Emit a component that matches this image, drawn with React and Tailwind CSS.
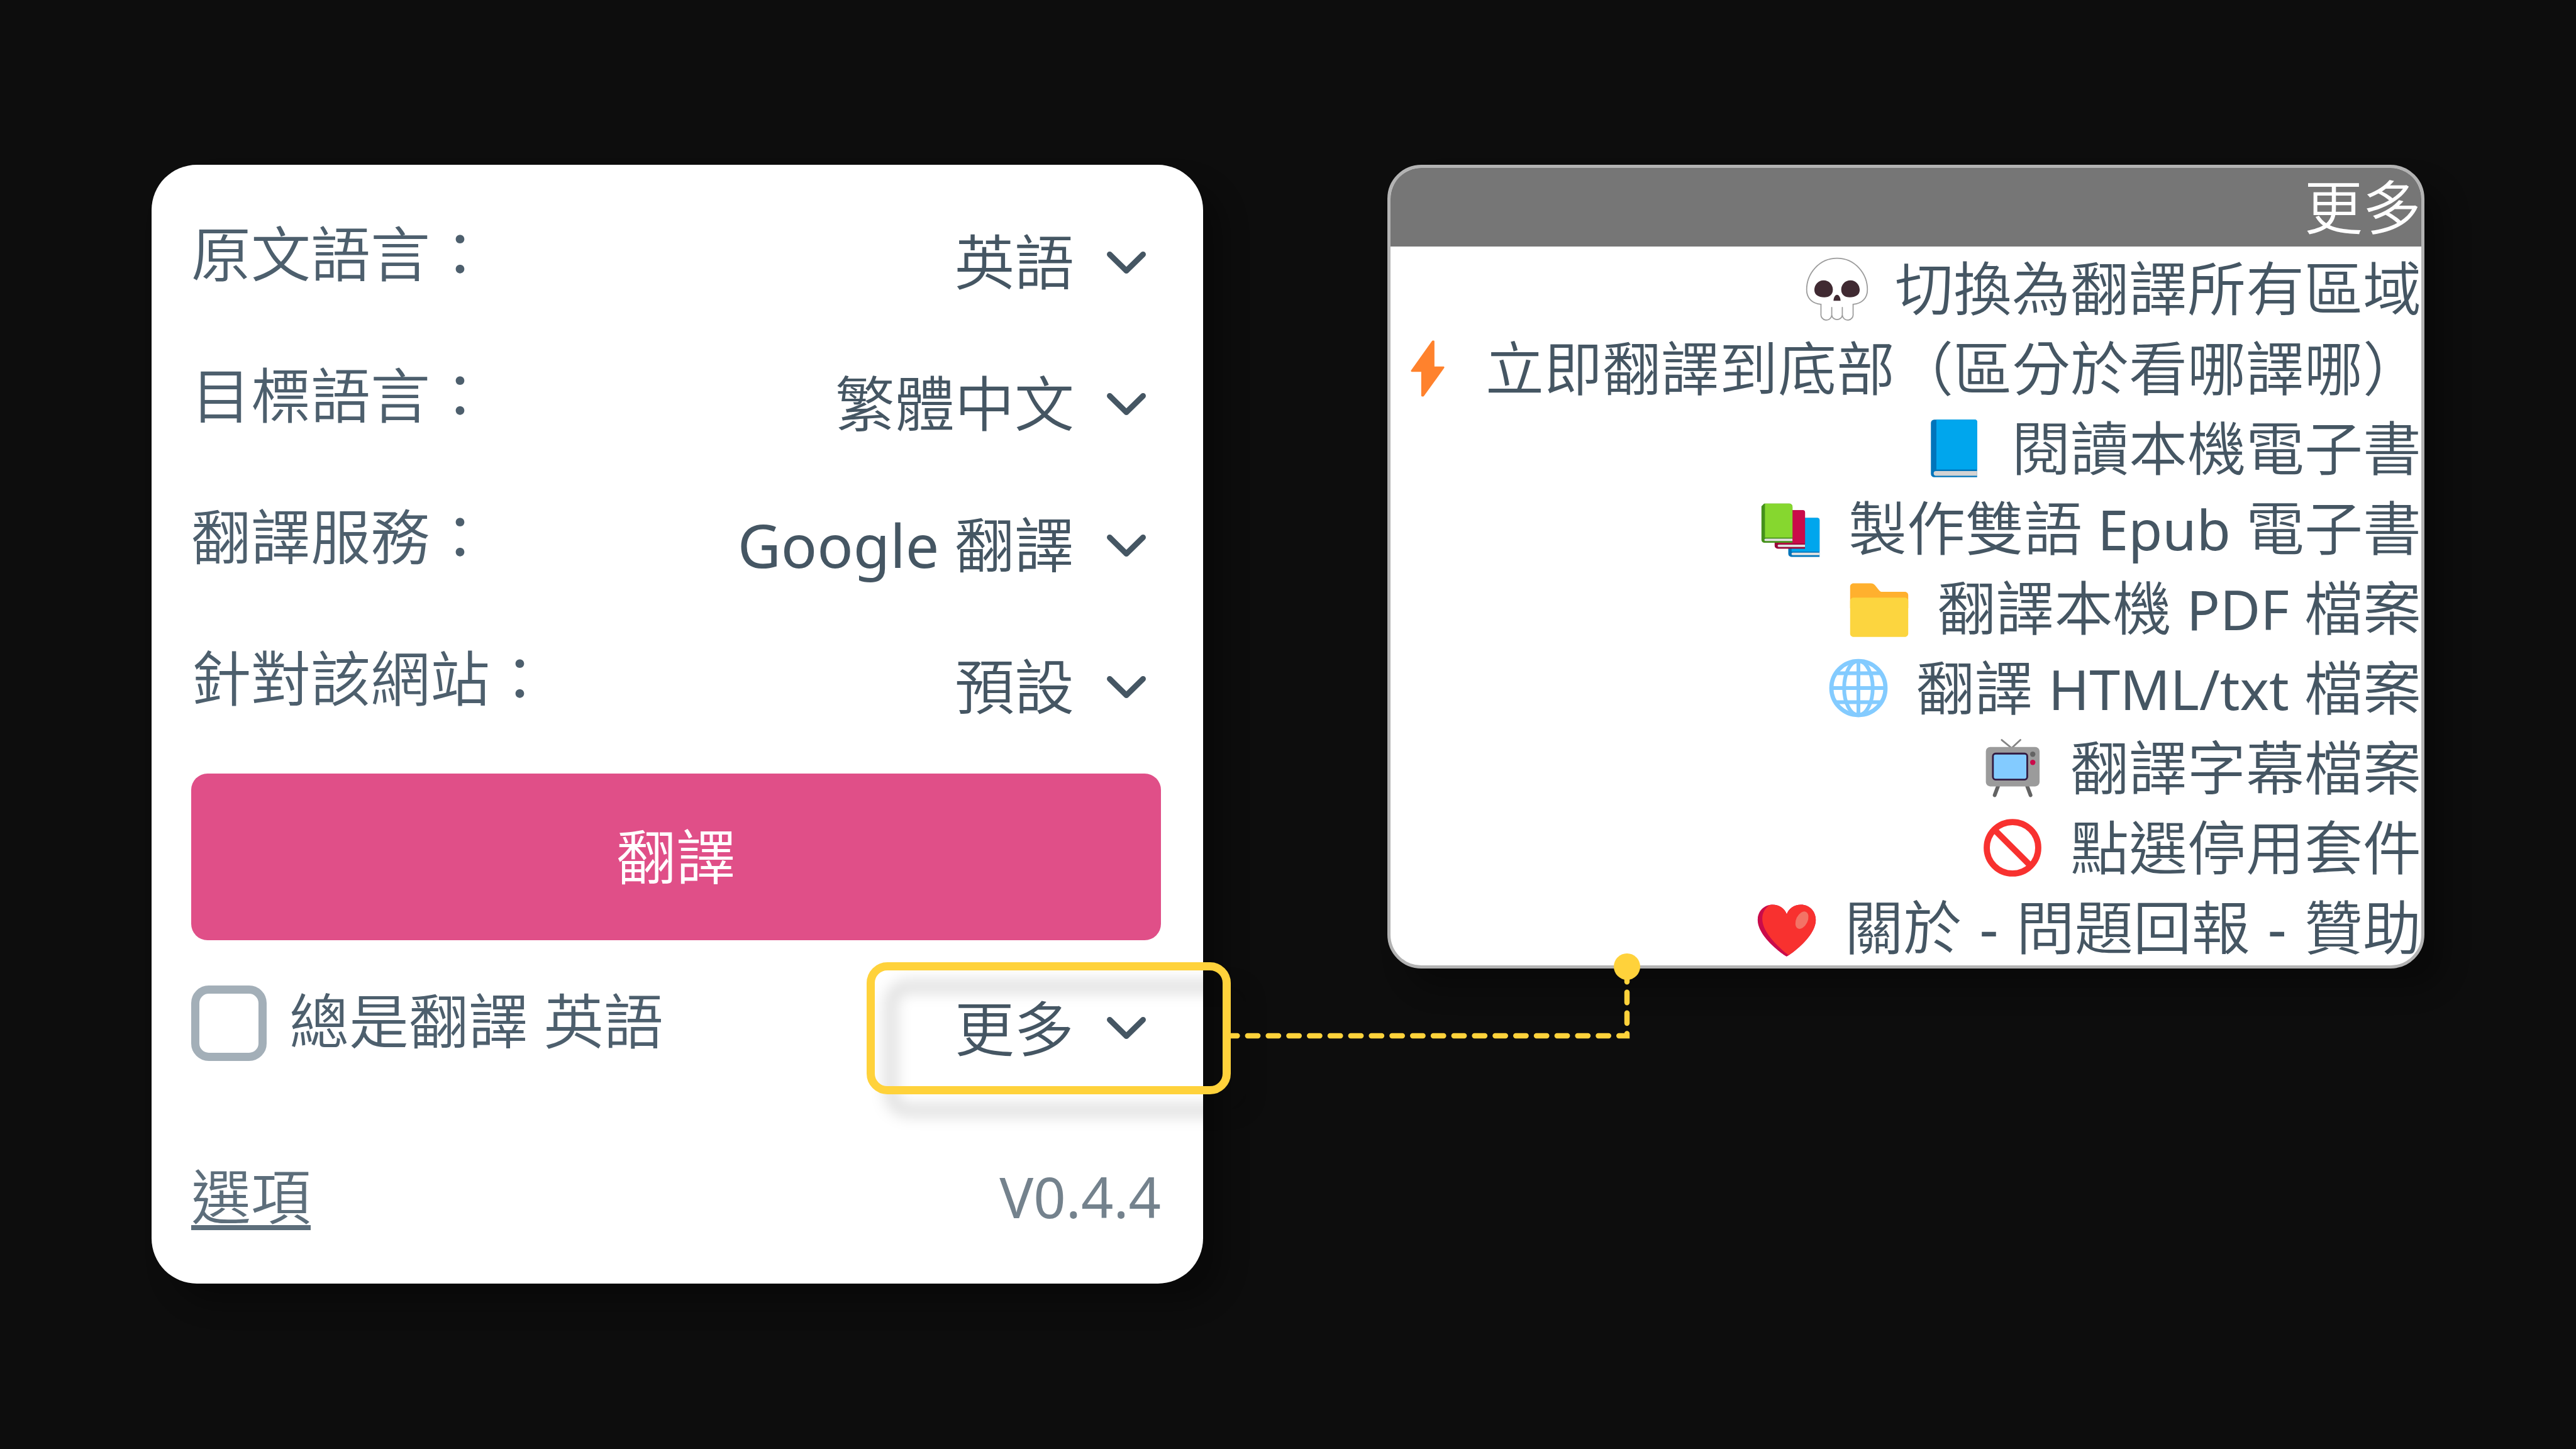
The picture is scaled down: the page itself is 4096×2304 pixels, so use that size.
import React, { useState } from 'react';

const FIELDS = [
  { id: 'source', label: '原文語言：', value: '英語' },
  { id: 'target', label: '目標語言：', value: '繁體中文' },
  { id: 'service', label: '翻譯服務：', value: 'Google 翻譯' },
  { id: 'site', label: '針對該網站：', value: '預設' },
];

// --- ICONS ---
const Chevron = ({ className }) => (
  <svg viewBox="0 0 66 40" className={className} fill="none" stroke="#455663" strokeWidth="9" strokeLinecap="round" strokeLinejoin="round" aria-hidden="true">
    <path d="M6.500 6.500 33 32.500 59.500 6.500" />
  </svg>
);

const Icon = ({ children }) => (
  <svg viewBox="0 0 32 32" className="size-28 shrink-0" aria-hidden="true">
    {children}
  </svg>
);

const Skull = () => (
  <Icon>
    <path
      d="M16 2.200C8 2.200 2.200 9 2.200 16.500c0 3.600 2.300 6.300 6.500 6.600V27.500a2.400 2.400 0 0 0 4.900.6 2.450 2.450 0 0 0 4.800 0 2.400 2.400 0 0 0 4.900-.6v-4.400c4.200-.3 6.500-3 6.500-6.600C29.800 9 24 2.200 16 2.200Z"
      fill="#fff"
      stroke="#9b9b9b"
      strokeWidth=".5"
    />
    <path d="M13.600 24.500v3.600M18.400 24.500v3.600" stroke="#9b9b9b" strokeWidth=".5" strokeLinecap="round" />
    <path d="M9.900 12.200c2.500 0 4.200 2 4.200 4.200s-1.500 3.500-3.900 3.500c-2.600 0-4.500-1-4.500-3.300s1.700-4.400 4.200-4.400ZM22.100 12.200c-2.500 0-4.200 2-4.200 4.200s1.500 3.500 3.900 3.500c2.600 0 4.500-1 4.500-3.300s-1.700-4.400-4.200-4.400Z" fill="#402a32" />
    <path d="M16 18.800c.9 0 1.600 1.400 1.600 2.700h-3.200c0-1.300.7-2.700 1.600-2.700Z" fill="#402a32" />
  </Icon>
);

const Bolt = () => (
  <Icon>
    <path d="M18.700 3.700v11.800h4.500L14 28.300h-.5V17.100H8.800l9.500-13.400Z" fill="#ff822d" stroke="#ff822d" strokeWidth=".8" strokeLinejoin="round" />
  </Icon>
);

const Book = () => (
  <Icon>
    <path d="M7 2.900h18.500a1 1 0 0 1 1 1v25.200H7a1.500 1.500 0 0 1-1.500-1.500V4.400A1.500 1.500 0 0 1 7 2.900Z" fill="#0074ba" />
    <path d="M8 2.900h17.500a1 1 0 0 1 1 1v21.700H8Z" fill="#00a6ed" />
    <path d="M7.800 26.300h18.700v2.100H7.800a1.050 1.050 0 0 1 0-2.100Z" fill="#d3d3d3" />
  </Icon>
);

const Books = () => (
  <Icon>
    <path d="M16.200 11.300h12a1 1 0 0 1 1 1V29H16.400a1.400 1.400 0 0 1-1.400-1.400V12.500Z" fill="#0074ba" />
    <path d="M16.500 11.300h11.700a1 1 0 0 1 1 1V26.600H16.500Z" fill="#00a6ed" />
    <path d="M17 27.100h12.200v1.100H17a.55.55 0 0 1 0-1.100Z" fill="#e1e1e1" />
    <path d="M10 7.800h11.600a1 1 0 0 1 1 1v16.500H10.200a1.400 1.400 0 0 1-1.400-1.400V9Z" fill="#990838" />
    <path d="M10.500 7.800h11.100a1 1 0 0 1 1 1v14.100H10.500Z" fill="#ca0b4a" />
    <path d="M10.700 23.400h11.900v1.100H10.700a.55.55 0 0 1 0-1.100Z" fill="#e1e1e1" />
    <path d="M4 4.800h11.500a1.400 1.400 0 0 1 1.400 1.400v16.400H4.200a1.400 1.400 0 0 1-1.400-1.400V6Z" fill="#44911b" />
    <path d="M4.400 4.800h11.100a1.400 1.400 0 0 1 1.400 1.400v14H4.400Z" fill="#86d72f" />
    <path d="M4.700 20.700h12.200v1.100H4.700a.55.55 0 0 1 0-1.100Z" fill="#e1e1e1" />
  </Icon>
);

const Folder = () => (
  <Icon>
    <path d="M4.300 4.700h7.900c.8 0 1.400.3 1.900.9l1.900 2.300c.4.5.9.7 1.500.7h10.200c.8 0 1.500.7 1.500 1.500V16H2.800V6.200c0-.8.700-1.500 1.500-1.500Z" fill="#ffb02e" />
    <path d="M4.300 11.200h23.400c.8 0 1.500.7 1.500 1.500v14.900c0 .8-.7 1.500-1.500 1.500H4.300c-.8 0-1.500-.7-1.500-1.500V12.700c0-.8.700-1.500 1.500-1.500Z" fill="#fcd53f" />
  </Icon>
);

const Globe = () => (
  <Icon>
    <g fill="none" stroke="#83cbff" strokeWidth="1.700">
      <circle cx="16" cy="16" r="12.300" strokeWidth="1.900" />
      <ellipse cx="16" cy="16" rx="6.500" ry="12.300" />
      <path d="M16 3.500v25M3.500 16h25M5.500 9.300h21M5.500 22.400h21" />
    </g>
  </Icon>
);

const Television = () => (
  <Icon>
    <path d="m15.600 7-4.500-3.700M15.600 7l4-3.700" stroke="#848484" strokeWidth=".8" strokeLinecap="round" />
    <path d="M9.400 24.400 7.900 28.400M22.700 24.400l1.500 4" stroke="#636363" strokeWidth="1.700" strokeLinecap="round" />
    <rect x="3.900" y="6.500" width="24.400" height="17.900" rx="2" fill="#9b9b9b" />
    <rect x="7.100" y="9.500" width="15.600" height="11.800" rx="1.200" fill="#83cbff" stroke="#321b41" strokeWidth=".8" />
    <circle cx="25.200" cy="9.800" r="1.200" fill="#636363" />
    <circle cx="25.200" cy="13.500" r="1.200" fill="#ca0b4a" />
  </Icon>
);

const Prohibited = () => (
  <Icon>
    <g fill="none" stroke="#f8312f" strokeWidth="2.800">
      <circle cx="16" cy="16" r="11.700" />
      <path d="m7.700 7.700 16.600 16.600" />
    </g>
  </Icon>
);

const Heart = () => (
  <Icon>
    <path d="M16 29.100c-.5 0-13.200-8.600-13.200-16.600 0-4 3-6.900 6.700-6.900 3 0 5.500 1.700 6.500 4.300 1-2.600 3.500-4.300 6.500-4.300 3.700 0 6.700 2.900 6.700 6.900 0 8-12.700 16.600-13.200 16.600Z" fill="#ca0b4a" />
    <path d="M16.800 28.500C13 25.500 4.900 18.500 4.900 12c0-2.800 1.300-4.900 3.300-6.200.4-.1.900-.2 1.300-.2 3 0 5.500 1.700 6.500 4.300 1-2.600 3.500-4.300 6.500-4.300 3.700 0 6.700 2.900 6.700 6.900 0 7.100-9.900 14.600-12.400 16Z" fill="#f8312f" />
    <ellipse cx="22.900" cy="12.600" rx="2.600" ry="4.200" transform="rotate(26 22.900 12.600)" fill="#f37366" />
  </Icon>
);

const Latin = ({ children }) => <span className="text-[88px]">{children}</span>;
const Dash = () => <span className="mx-1">-</span>;

const MENU = [
  { icon: <Skull />, text: '切換為翻譯所有區域' },
  { icon: <Bolt />, text: '立即翻譯到底部（區分於看哪譯哪）' },
  { icon: <Book />, text: '閱讀本機電子書' },
  { icon: <Books />, text: <>製作雙語 <Latin>Epub</Latin> 電子書</> },
  { icon: <Folder />, text: <>翻譯本機 <Latin>PDF</Latin> 檔案</> },
  { icon: <Globe />, text: <>翻譯 <Latin>HTML/txt</Latin> 檔案</> },
  { icon: <Television />, text: '翻譯字幕檔案' },
  { icon: <Prohibited />, text: '點選停用套件' },
  { icon: <Heart />, text: <>關於 <Dash /> 問題回報 <Dash /> 贊助</> },
];

// --- POPUP PANEL ---
const Field = ({ id, label, value }) => (
  <div className="flex h-[225px] items-center justify-between">
    <label htmlFor={id} className="shrink-0 pb-7 text-[#4d5f6d]">{label}</label>
    <div className="relative">
      <select id={id} className="h-36 appearance-none bg-transparent pr-[138px] pb-1 text-right leading-[140px] text-[#455663] outline-none [text-align-last:right]">
        <option>{value}</option>
      </select>
      <Chevron className="pointer-events-none absolute top-1/2 right-[22px] h-10 w-[66px] -translate-y-1/2" />
    </div>
  </div>
);

// Frame around the "more" button, with the dashed line that leads to the menu
const Callout = () => (
  <div className="pointer-events-none absolute top-1/2 -right-[111px] h-[210px] w-[579px] -translate-y-1/2">
    <div className="h-full rounded-[33px] border-[13px] border-[#ffd23b] drop-shadow-[32px_32px_12px_rgba(0,0,0,0.2)]" />
    <svg viewBox="0 0 660 150" className="absolute -top-4 left-[573px] h-[150px] w-[660px]" fill="none" aria-hidden="true">
      <path d="M0 133H636V23" stroke="#ffd23b" strokeWidth="8.400" strokeLinecap="round" strokeDasharray="16.400 16.400" />
      <circle cx="636" cy="23" r="21" fill="#ffd23b" />
    </svg>
  </div>
);

const Popup = ({ open, onMore }) => {
  const [always, setAlways] = useState(false);

  return (
    <section className="relative z-10 rounded-[72px] bg-white pt-[43px] pr-[67px] pb-3 pl-[63px] text-[95px] shadow-[32px_32px_40px_rgba(0,0,0,0.3)]">
      {FIELDS.map((f) => <Field key={f.id} {...f} />)}

      <button type="button" className="mt-[25px] flex h-[265px] w-full items-center justify-center rounded-[26px] bg-[#e04f88] text-white">
        翻譯
      </button>

      <div className="flex h-[280px] items-center justify-between">
        <label className="flex items-center gap-9 pb-4 text-[#4d5f6d]">
          <input
            type="checkbox"
            checked={always}
            onChange={(e) => setAlways(e.target.checked)}
            className="size-[120px] appearance-none rounded-[28px] border-[13px] border-[#a3afb8] bg-white checked:bg-[#a3afb8]"
          />
          <span className="pb-2">總是翻譯 英語</span>
        </label>
        <div className="relative">
          <button type="button" aria-expanded={open} onClick={onMore} className="flex items-center gap-[50px] pr-[22px] text-[#455663]">
            更多
            <Chevron className="h-10 w-[66px]" />
          </button>
          <Callout />
        </div>
      </div>

      <div className="flex h-[254px] items-center justify-between">
        <a href="#options" className="text-[#5d6e7b] underline decoration-8 underline-offset-[9px]">選項</a>
        <span className="text-[90px] text-[#74828d]">V0.4.4</span>
      </div>
    </section>
  );
};

// --- MORE MENU ---
const MoreMenu = () => (
  <section className="overflow-hidden rounded-[54px] border-[5px] border-[#b3b3b3] bg-white text-right text-[93px] text-[#455663] shadow-[32px_32px_40px_rgba(0,0,0,0.3)]">
    <h2 className="flex h-[125px] items-center justify-end bg-[#767676] text-white">更多</h2>
    <ul>
      {MENU.map((item, i) => (
        <li key={i}>
          <button type="button" className="flex h-[127px] w-full items-center justify-end gap-9 pt-1.5 whitespace-nowrap">
            {item.icon}
            <span>{item.text}</span>
          </button>
        </li>
      ))}
    </ul>
  </section>
);

export default function App() {
  const [open, setOpen] = useState(true);

  return (
    <main
      lang="zh-Hant"
      className="grid min-h-screen grid-cols-[1672fr_1649fr] items-start gap-[293px] bg-[#0d0d0d] px-[241px] pt-[262px] leading-none [font-family:'Noto_Sans','Noto_Sans_CJK_TC_DemiLight','Noto_Sans_CJK_TC_Light','Noto_Sans_CJK_TC',sans-serif]"
    >
      <Popup open={open} onMore={() => setOpen(!open)} />
      {open && <MoreMenu />}
    </main>
  );
}
